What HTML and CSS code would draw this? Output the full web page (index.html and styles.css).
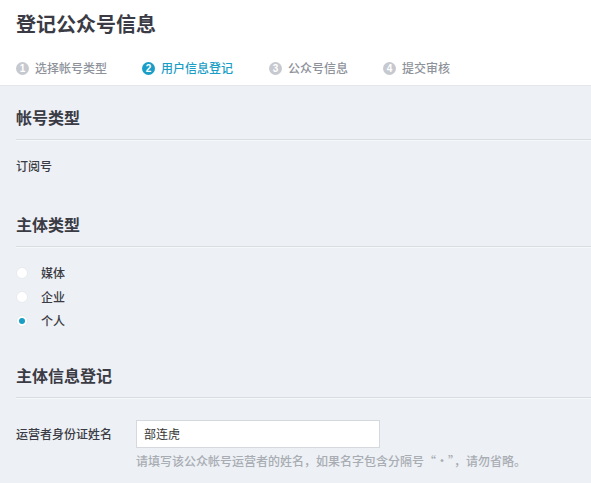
FILE: index.html
```html
<!DOCTYPE html>
<html lang="zh-CN">
<head>
<meta charset="utf-8">
<title>登记公众号信息</title>
<link rel="stylesheet" href="styles.css">
</head>
<body>
<header class="top">
  <h1 class="title">登记公众号信息</h1>
  <ol class="steps">
    <li class="step"><span class="num">1</span>选择帐号类型</li>
    <li class="step active"><span class="num">2</span>用户信息登记</li>
    <li class="step"><span class="num">3</span>公众号信息</li>
    <li class="step"><span class="num">4</span>提交审核</li>
  </ol>
</header>
<main class="content">
  <section class="sec">
    <h2 class="sec-title">帐号类型</h2>
    <p class="value">订阅号</p>
  </section>
  <section class="sec">
    <h2 class="sec-title">主体类型</h2>
    <ul class="radios">
      <li class="radio"><span class="dot"></span>媒体</li>
      <li class="radio"><span class="dot"></span>企业</li>
      <li class="radio checked"><span class="dot"></span>个人</li>
    </ul>
  </section>
  <section class="sec">
    <h2 class="sec-title">主体信息登记</h2>
    <div class="field">
      <label class="field-label">运营者身份证姓名</label>
      <div class="field-body">
        <div class="input">部连虎</div>
        <p class="hint">请填写该公众帐号运营者的姓名，如果名字包含分隔号“·”，请勿省略。</p>
      </div>
    </div>
  </section>
</main>
</body>
</html>
```
FILE: styles.css
```css
* { box-sizing: border-box; }
html, body { margin: 0; padding: 0; }
body {
  font-family: "Noto Sans CJK SC", "Noto Sans", sans-serif;
  background: #edf0f4;
  color: #353535;
  width: 591px;
  height: 483px;
  overflow: hidden;
}
.top {
  background: #fff;
  border-bottom: 1px solid #e3e7ec;
  padding: 10px 16px 0;
  height: 86px;
}
.title {
  margin: 0;
  font-size: 20px;
  line-height: 28px;
  font-weight: bold;
  color: #3b3b45;
}
.steps {
  list-style: none;
  margin: 0;
  padding: 0;
  display: flex;
  margin-top: 21px;
}
.step {
  display: flex;
  align-items: center;
  font-size: 12px;
  line-height: 18px;
  color: #8e929a;
  font-weight: 500;
}
.step:nth-child(1) { width: 126px; }
.step:nth-child(2) { width: 127px; }
.step:nth-child(3) { width: 114px; }
.num {
  width: 13px;
  height: 13px;
  border-radius: 50%;
  background: #c6c9cf;
  color: #fff;
  font-size: 10px;
  line-height: 13px;
  text-align: center;
  font-weight: bold;
  margin-right: 6px;
  font-family: "Liberation Sans", sans-serif;
}
.step.active { color: #1a9ec6; }
.step.active .num { background: #1a9ec6; }
.content { padding: 0 0 0 16px; }
.sec-title {
  margin: 0;
  font-size: 16px;
  font-weight: bold;
  color: #3b3b45;
  line-height: 22px;
  padding: 20px 0 11px;
  border-bottom: 1px solid #d9dde2;
  box-shadow: 0 1px 0 #f6f7f9;
}
.value {
  margin: 0;
  font-size: 12px;
  line-height: 18px;
  padding: 17px 0 18px;
  color: #3b3b45;
  font-weight: 500;
}
.radios {
  list-style: none;
  margin: 0;
  padding: 17px 0 14px;
  display: flex;
  flex-direction: column;
  gap: 6px;
}
.radio {
  display: flex;
  align-items: center;
  height: 18px;
  font-size: 12px;
  line-height: 18px;
  color: #3b3b45;
  font-weight: 500;
}
.dot {
  width: 12px;
  height: 12px;
  border-radius: 50%;
  background: #fff;
  border: 1px solid #e8eaee;
  margin-right: 13px;
  position: relative;
}
.radio.checked .dot::after {
  content: "";
  position: absolute;
  left: 2px;
  top: 2px;
  width: 6px;
  height: 6px;
  border-radius: 50%;
  background: #1a9ec6;
}
.field {
  display: flex;
  padding-top: 22px;
}
.field-label {
  width: 120px;
  font-size: 12px;
  line-height: 28px;
  color: #3b3b45;
  font-weight: 500;
}
.input {
  width: 244px;
  height: 28px;
  background: #fff;
  border: 1px solid #d5d9de;
  font-size: 12px;
  line-height: 26px;
  padding: 0 7px;
  color: #353535;
}
.hint {
  margin: 4px 0 0;
  font-size: 12px;
  line-height: 18px;
  color: #a8acb3;
  font-weight: 500;
}
```
